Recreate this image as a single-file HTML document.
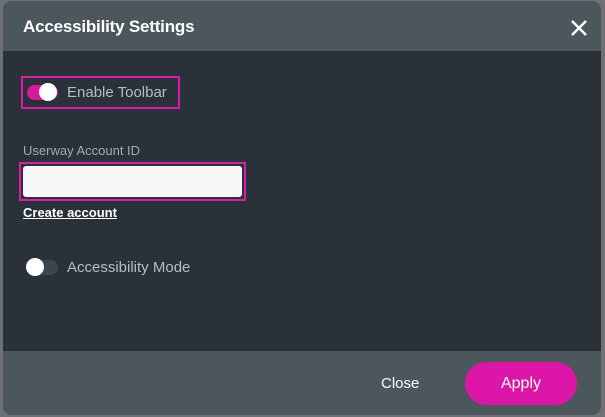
<!DOCTYPE html>
<html><head><meta charset="utf-8"><style>
*{margin:0;padding:0;box-sizing:border-box}
html,body{width:605px;height:417px;background:#6e7173;overflow:hidden;font-family:"Liberation Sans",sans-serif}
.dlg{position:absolute;left:3px;top:1px;width:598px;height:414px;border-radius:9px;overflow:hidden;background:#293238}
.hd{position:absolute;left:0;top:0;width:100%;height:50px;background:#4b575d}
.hd h1{position:absolute;left:20px;top:16px;font-size:17px;font-weight:bold;color:#fff;letter-spacing:-0.2px}
.x{position:absolute;left:566px;top:17px}
.ft{position:absolute;left:0;top:350px;width:100%;height:64px;background:#4b575d}
.close{position:absolute;left:378px;top:374px;font-size:15px;color:#fff}
.apply{position:absolute;left:462px;top:361px;width:112px;height:43px;border-radius:22px;background:#db16a8;color:#fff;font-size:16px;text-align:center;line-height:43px}
.hl1{position:absolute;left:18px;top:75px;width:159px;height:33px;border:2px solid #e01aa8}
.tg{position:absolute;width:31px;height:15px;border-radius:8px}
.knob{position:absolute;width:18px;height:18px;border-radius:50%;background:#fff}
.lbl{position:absolute;font-size:15px;color:#b9bdbf}
.small{position:absolute;font-size:13px;color:#a6abad}
.inp{position:absolute;left:16px;top:161px;width:227px;height:39px;border:2px solid #e01aa8;padding:2px}
.inp div{width:100%;height:100%;background:#f7f7f7;border-radius:3px}
.ca{position:absolute;left:20px;top:204px;font-size:13px;color:#fff;text-decoration:underline;font-weight:bold}
</style></head><body>
<div class="dlg">
<div class="hd"><h1>Accessibility Settings</h1>
<svg class="x" width="20" height="20" viewBox="0 0 20 20"><path d="M3 3L17 17M17 3L3 17" stroke="#fff" stroke-width="2.4"/></svg></div>
<div class="hl1"></div>
<div class="tg" style="left:24px;top:84px;background:#d8189e"></div>
<div class="knob" style="left:36px;top:82px"></div>
<div class="lbl" style="left:64px;top:83px">Enable Toolbar</div>
<div class="small" style="left:20px;top:142px">Userway Account ID</div>
<div class="inp"><div></div></div>
<div class="ca">Create account</div>
<div class="tg" style="left:24px;top:259px;background:#3c4549"></div>
<div class="knob" style="left:23px;top:257px"></div>
<div class="lbl" style="left:64px;top:258px">Accessibility Mode</div>
<div class="ft"></div>
<div class="close">Close</div>
<div class="apply">Apply</div>
</div>
</body></html>
